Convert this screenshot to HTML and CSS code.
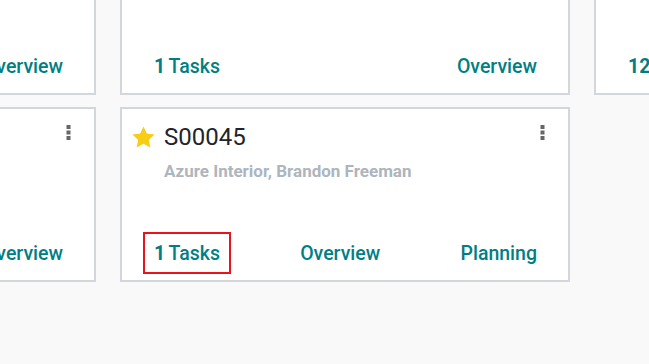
FILE: index.html
```html
<!DOCTYPE html>
<html lang="en">
<head>
  <meta charset="UTF-8">
  <meta name="viewport" content="width=device-width, initial-scale=1.0">
  <title>Projects</title>
  <link rel="stylesheet" href="styles.css">
</head>
<body>

<div class="kanban">
  <!-- top row, cut by the window -->
  <div class="card">
    <div class="card-foot">
      <a class="btn"><b>3</b> Tasks</a>
      <a class="btn">Overview</a>
    </div>
  </div>
  <div class="card">
    <div class="card-foot">
      <a class="btn"><b>1</b> Tasks</a>
      <a class="btn">Overview</a>
    </div>
  </div>
  <div class="card">
    <div class="card-foot">
      <a class="btn"><b>12</b> Tasks</a>
      <a class="btn">Overview</a>
    </div>
  </div>

  <!-- second row -->
  <div class="card">
    <div class="card-head">
      <div class="card-title"></div>
      <span class="kebab">
        <svg width="5" height="16" viewBox="0 0 5 16"><rect x="0.5" y="0" width="4" height="4"/><rect x="0.5" y="5.5" width="4" height="4"/><rect x="0.5" y="11" width="4" height="4"/></svg>
      </span>
    </div>
    <div class="card-foot">
      <a class="btn"><b>2</b> Tasks</a>
      <a class="btn">Overview</a>
    </div>
  </div>
  <div class="card">
    <div class="card-head">
      <svg class="star" width="23" height="22" viewBox="1.5 1 21 20.5"><path d="M12 1.5l3.1 6.6 7.2.9-5.3 5 1.4 7.1L12 17.6l-6.4 3.5 1.4-7.1-5.3-5 7.2-.9z"/></svg>
      <div class="card-title">
        <div class="name">S00045</div>
        <div class="partner">Azure Interior, Brandon Freeman</div>
      </div>
      <span class="kebab">
        <svg width="5" height="16" viewBox="0 0 5 16"><rect x="0.5" y="0" width="4" height="4"/><rect x="0.5" y="5.5" width="4" height="4"/><rect x="0.5" y="11" width="4" height="4"/></svg>
      </span>
    </div>
    <div class="card-foot">
      <a class="btn btn-marked"><b>1</b> Tasks</a>
      <a class="btn">Overview</a>
      <a class="btn">Planning</a>
    </div>
  </div>
</div>

</body>
</html>
```

FILE: styles.css
```css
body {
  margin: 0;
  background-color: #f9f9f9;
  font-family: Roboto, "Liberation Sans", sans-serif;
  overflow: hidden;
}
.kanban {
  display: grid;
  grid-template-columns: repeat(3, 450px);
  grid-auto-rows: 175px;
  gap: 12px 24px;
  margin-top: -80px;
  margin-left: -354px;
}
.card {
  box-sizing: border-box;
  display: flex;
  flex-direction: column;
  background-color: #fff;
  border: 2px solid #d3d6db;
  padding: 14px 20px 6px 21px;
}
.card-head {
  display: flex;
  align-items: flex-start;
}
.star {
  fill: #f8cd16;
  margin: 3px 9px 0 -11px;
  flex: none;
}
.card-title {
  flex: 1;
}
.name {
  font-size: 24px;
  line-height: 29px;
  color: #212529;
}
.partner {
  margin-top: 8px;
  font-size: 17px;
  font-weight: bold;
  line-height: 22px;
  color: #adb5bd;
}
.kebab {
  margin: 2px 3px 0 0;
  fill: #666;
  line-height: 0;
}
.card-foot {
  margin-top: auto;
  display: flex;
  justify-content: space-between;
}
.btn {
  padding: 2px 9px 0;
  border: 2px solid transparent;
  font-size: 19.5px;
  font-weight: 500;
  line-height: 36px;
  color: #017e84;
  cursor: pointer;
}
.btn b {
  margin-right: -1px;
}
.btn-marked {
  border-color: #e8141b;
}
```
